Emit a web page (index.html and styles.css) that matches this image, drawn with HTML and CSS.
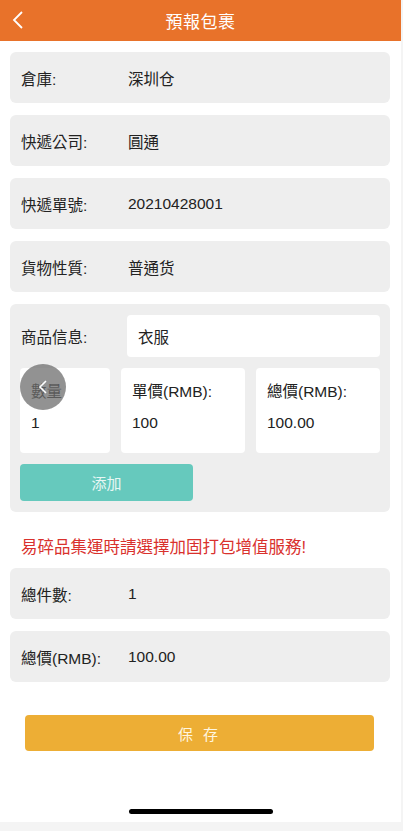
FILE: index.html
```html
<!DOCTYPE html>
<html lang="zh-Hant">
<head>
    <meta charset="UTF-8">
    <meta name="viewport" content="width=device-width, initial-scale=1.0">
    <title>預報包裹</title>
    <link rel="stylesheet" href="styles.css">
</head>
<body>
    <div class="page">
        <div class="header">
            <span class="back">
                <svg width="12" height="20" viewBox="0 0 12 20"><path d="M10 2 L2 10 L10 18" fill="none" stroke="#fff" stroke-width="1.8"/></svg>
            </span>
            <h1 class="title">預報包裹</h1>
        </div>

        <div class="content">
            <div class="row">
                <span class="label">倉庫:</span>
                <span class="value">深圳仓</span>
            </div>
            <div class="row">
                <span class="label">快遞公司:</span>
                <span class="value">圓通</span>
            </div>
            <div class="row">
                <span class="label">快遞單號:</span>
                <span class="value">20210428001</span>
            </div>
            <div class="row">
                <span class="label">貨物性質:</span>
                <span class="value">普通货</span>
            </div>

            <div class="goods">
                <div class="goods-name">
                    <span class="label">商品信息:</span>
                    <div class="field">衣服</div>
                </div>
                <div class="goods-nums">
                    <div class="box box-qty">
                        <p>數量</p>
                        <p>1</p>
                        <span class="float-btn">
                            <svg width="10" height="16" viewBox="0 0 10 16"><path d="M8 2 L2 8 L8 14" fill="none" stroke="#fff" stroke-width="1.6"/></svg>
                        </span>
                    </div>
                    <div class="box">
                        <p>單價(RMB):</p>
                        <p>100</p>
                    </div>
                    <div class="box">
                        <p>總價(RMB):</p>
                        <p>100.00</p>
                    </div>
                </div>
                <button class="add-btn">添加</button>
            </div>

            <p class="notice">易碎品集運時請選擇加固打包增值服務!</p>

            <div class="row">
                <span class="label">總件數:</span>
                <span class="value">1</span>
            </div>
            <div class="row">
                <span class="label">總價(RMB):</span>
                <span class="value">100.00</span>
            </div>

            <button class="save-btn">保 存</button>
        </div>

        <div class="home-bar"></div>
    </div>
</body>
</html>
```

FILE: styles.css
```css
* {
    margin: 0;
    padding: 0;
    box-sizing: border-box;
    font-family: 'Liberation Sans', 'Noto Sans CJK TC', sans-serif;
}

body {
    background: #f4f4f4;
    color: #222;
    width: 403px;
    height: 831px;
    overflow: hidden;
}

.page {
    width: 401px;
    height: 822px;
    background: #fff;
    display: flex;
    flex-direction: column;
}

.header {
    height: 41px;
    background: #e8722a;
    display: flex;
    align-items: center;
    justify-content: center;
    position: relative;
}

.back {
    position: absolute;
    left: 12px;
    top: 10px;
    display: flex;
}

.title {
    color: #fff;
    font-size: 17px;
    font-weight: normal;
    letter-spacing: 0.5px;
}

.content {
    padding: 11px 11px 0 10px;
    display: flex;
    flex-direction: column;
    gap: 12px;
}

.row {
    height: 51px;
    background: #eeeeee;
    border-radius: 6px;
    display: flex;
    align-items: center;
    padding-left: 11px;
    font-size: 15.5px;
}

.label {
    width: 107px;
    flex-shrink: 0;
}

.goods {
    background: #eeeeee;
    border-radius: 6px;
    padding: 11px 10px 11px 10px;
    display: flex;
    flex-direction: column;
    gap: 11px;
    font-size: 15.5px;
}

.goods-name {
    display: flex;
    align-items: center;
}

.goods-name .label {
    padding-left: 1px;
}

.field {
    flex: 1;
    height: 42px;
    background: #fff;
    border-radius: 4px;
    display: flex;
    align-items: center;
    padding-left: 11px;
}

.goods-nums {
    display: flex;
    gap: 11px;
}

.box {
    flex: 1 1 0;
    min-width: 0;
    height: 85px;
    background: #fff;
    border-radius: 4px;
    padding: 11px 0 0 11px;
    display: flex;
    flex-direction: column;
    gap: 13px;
    position: relative;
    white-space: nowrap;
}

.goods-nums .box-qty {
    flex: 0 0 90px;
}

.float-btn {
    position: absolute;
    left: 0;
    top: -4px;
    width: 46px;
    height: 46px;
    border-radius: 50%;
    background: rgba(110, 110, 110, 0.75);
    display: flex;
    align-items: center;
    justify-content: center;
}

.add-btn {
    width: 173px;
    height: 37px;
    border: 0;
    border-radius: 4px;
    background: #66c9bd;
    color: #e8f7f4;
    font-size: 15px;
}

.notice {
    color: #d9312d;
    font-size: 16.5px;
    padding: 10px 0 0 11px;
    margin-bottom: -2px;
}

.save-btn {
    margin: 21px 16px 0 15px;
    height: 36px;
    border: 0;
    border-radius: 4px;
    background: #edae35;
    color: #fff6e0;
    font-size: 15px;
    letter-spacing: 3px;
}

.home-bar {
    width: 144px;
    height: 5px;
    border-radius: 3px;
    background: #000;
    margin: auto auto 8px;
}
```
